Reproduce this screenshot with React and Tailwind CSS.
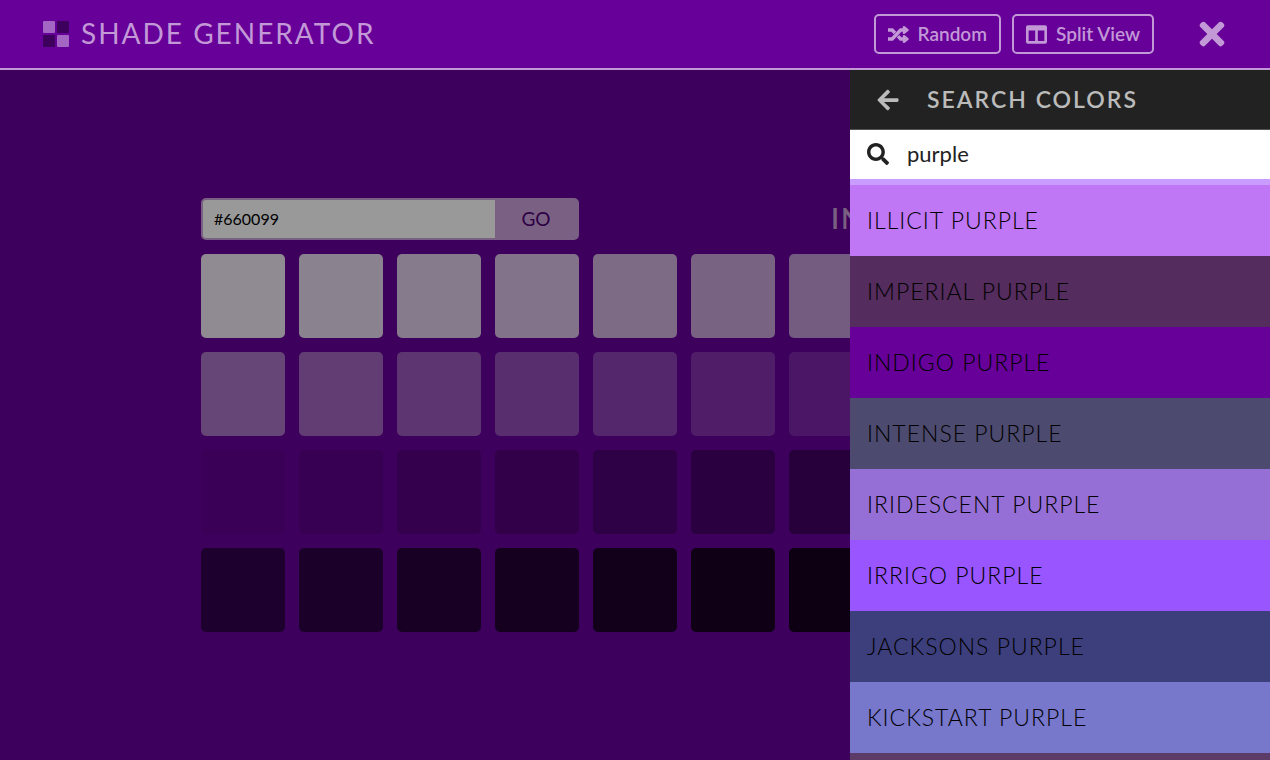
import React, { useState } from 'react';
import { FaArrowLeft, FaSearch, FaTimes, FaColumns } from 'react-icons/fa';

const BASE = [102, 0, 153];

const mix = (rgb, target, amount) =>
  `rgb(${rgb.map((c) => Math.round(c + (target - c) * amount)).join(', ')})`;

// 18 tints (90% -> 5% white) followed by 18 shades (5% -> 90% black)
const tints = Array.from({ length: 18 }, (_, i) => mix(BASE, 255, (18 - i) * 0.05));
const shades = Array.from({ length: 18 }, (_, i) => mix(BASE, 0, (i + 1) * 0.05));
const swatches = [...tints, ...shades];

const results = [
  { name: 'Illicit Purple', hex: '#bf77f6' },
  { name: 'Imperial Purple', hex: '#542c5d' },
  { name: 'Indigo Purple', hex: '#660099' },
  { name: 'Intense Purple', hex: '#4d4a6f' },
  { name: 'Iridescent Purple', hex: '#966fd6' },
  { name: 'Irrigo Purple', hex: '#9955ff' },
  { name: 'Jacksons Purple', hex: '#3d3f7d' },
  { name: 'Kickstart Purple', hex: '#7777cc' },
];

const Logo = () => (
  <svg className="w-[26px] h-[26px]" viewBox="0 0 26 26" aria-hidden="true">
    <rect width="12" height="12" rx="1" fill="#a366c2" />
    <rect x="14" width="12" height="12" rx="1" fill="#3d005c" />
    <rect y="14" width="12" height="12" rx="1" fill="#3d005c" />
    <rect x="14" y="14" width="12" height="12" rx="1" fill="#a366c2" />
  </svg>
);

const ShuffleIcon = () => (
  <svg className="w-[21px] h-[17px]" viewBox="0 0 21 17" fill="none" stroke="currentColor" strokeWidth="3.4" aria-hidden="true">
    <path d="M0 13h4.2L12.6 4H17" />
    <path d="M0 4h4.2L7 7" />
    <path d="M10 10.2l2.6 2.8H17" />
    <path d="M16 1.4L19.4 4 16 6.6z" fill="currentColor" strokeWidth="2.6" strokeLinejoin="round" />
    <path d="M16 10.4l3.4 2.6-3.4 2.6z" fill="currentColor" strokeWidth="2.6" strokeLinejoin="round" />
  </svg>
);

const Header = () => (
  <header className="flex items-center justify-between h-[70px] pl-[43px] pr-11 border-b-2 border-[#c299d6] bg-[#660099] text-[#c299d6]">
    <div className="flex items-center gap-3">
      <Logo />
      <h1 className="pb-0.5 text-[28px] leading-8 tracking-[2px] uppercase">Shade Generator</h1>
    </div>
    <div className="flex items-center">
      <button className="flex items-center gap-[9px] h-10 px-3 mr-[11px] border-2 border-[#c299d6] rounded-[5px] text-[19px] font-semibold">
        <ShuffleIcon />
        <span>Random</span>
      </button>
      <button className="flex items-center gap-[9px] h-10 px-3 mr-11 border-2 border-[#c299d6] rounded-[5px] text-[19px] font-semibold">
        <FaColumns className="w-[21px] h-[21px]" />
        <span>Split View</span>
      </button>
      <button aria-label="Close">
        <FaTimes className="w-7 h-9" />
      </button>
    </div>
  </header>
);

const Generator = () => {
  const [hex, setHex] = useState('#660099');

  return (
    <div className="flex flex-col gap-3.5 w-[868px]">
      <div className="flex items-center justify-between">
        <form className="flex w-[378px] h-[42px] rounded-[5px] border-2 border-[#cba0da] bg-[#cba0da] overflow-hidden" onSubmit={(e) => e.preventDefault()}>
          <input
            aria-label="Hex color"
            className="flex-1 min-w-0 px-[11px] bg-white text-base text-black outline-none"
            value={hex}
            onChange={(e) => setHex(e.target.value)}
          />
          <button className="w-[82px] text-[19px] text-[#4d0073]">GO</button>
        </form>
        <h2 className="pb-0.5 text-[28px] leading-8 font-semibold tracking-[2px] uppercase text-[#cba0da]">Indigo Purple</h2>
      </div>
      <div className="grid grid-cols-9 gap-3.5">
        {swatches.map((color, i) => (
          <button
            key={i}
            aria-label={color}
            className="h-[84px] rounded-[5px]"
            style={{ backgroundColor: color }}
          ></button>
        ))}
      </div>
    </div>
  );
};

const SearchPanel = () => {
  const [query, setQuery] = useState('purple');

  return (
    <aside className="absolute inset-y-0 right-0 flex flex-col w-[420px] bg-[#222222] overflow-hidden">
      <div className="flex items-center gap-[27px] h-[60px] shrink-0 px-[26px] border-b border-[#555555] text-[#bbbbbb]">
        <button aria-label="Back">
          <FaArrowLeft className="w-6 h-6" />
        </button>
        <h2 className="text-[23px] font-semibold tracking-[2px] uppercase">Search Colors</h2>
      </div>
      <label className="flex items-center gap-[18px] h-[49px] shrink-0 px-[17px] pb-0.5 bg-white text-[#222222]">
        <FaSearch className="w-[22px] h-[22px]" />
        <input
          aria-label="Search colors"
          className="flex-1 min-w-0 text-[22px] outline-none"
          value={query}
          onChange={(e) => setQuery(e.target.value)}
        />
      </label>
      <ul className="flex flex-col flex-1 min-h-0 overflow-hidden">
        <li className="h-1.5 shrink-0 bg-[#c99dff]"></li>
        {results.map((color) => (
          <li key={color.name} className="h-[71px] shrink-0" style={{ backgroundColor: color.hex }}>
            <button className="w-full h-full px-[17px] text-left text-[23px] font-light tracking-[1px] uppercase text-black">
              {color.name}
            </button>
          </li>
        ))}
        <li className="flex-1 bg-[#5c3c66]"></li>
      </ul>
    </aside>
  );
};

const App = () => (
  <div className="flex flex-col h-screen font-['Lato',sans-serif]">
    <Header />
    <div className="relative flex-1 min-h-0 overflow-hidden bg-[#660099]">
      <main className="flex items-center justify-center h-full">
        <Generator />
      </main>
      <div className="absolute inset-0 bg-black/40"></div>
      <SearchPanel />
    </div>
  </div>
);

export default App;
